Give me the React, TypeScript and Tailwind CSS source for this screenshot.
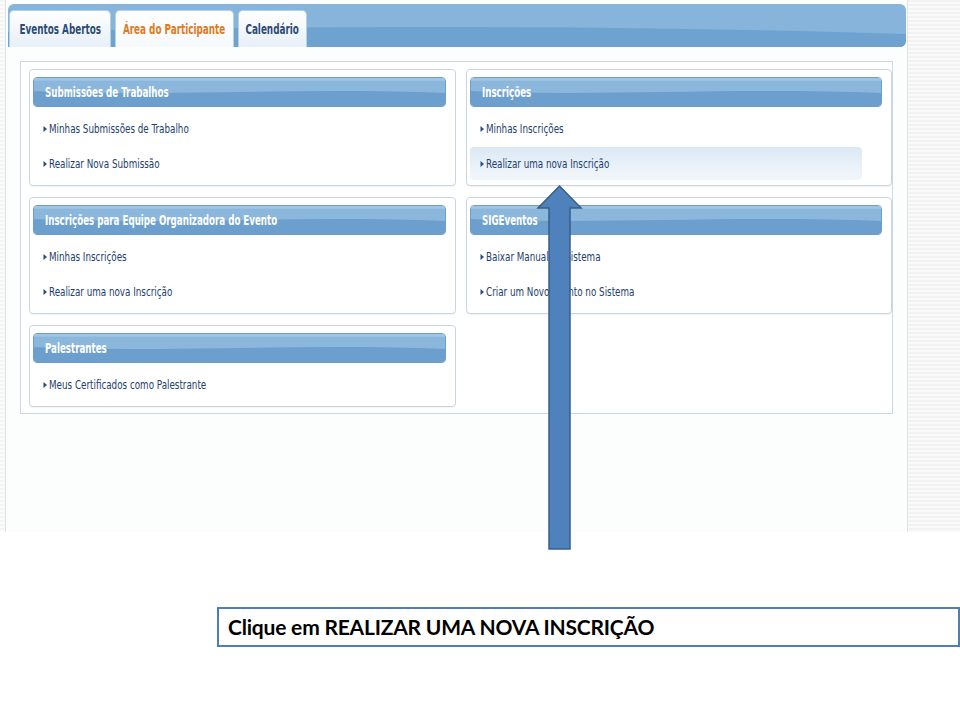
import React from "react";

const UI_FONT = "font-['DejaVu_Sans_Condensed','DejaVu_Sans',sans-serif]";

function Wave({ light, dark }: { light: string; dark: string }) {
  return (
    <svg className="absolute inset-0 w-full h-full" preserveAspectRatio="none" viewBox="0 0 400 30">
      <rect x="0" y="0" width="400" height="30" fill={light} />
      <path d="M0 14 C 120 20, 260 10, 400 16 L400 30 L0 30 Z" fill={dark} />
      <rect x="0" y="0" width="400" height="3" fill="#ffffff" opacity="0.18" />
    </svg>
  );
}

function Bullet() {
  return (
    <svg width="5" height="8" viewBox="0 0 5 8" className="mr-[1px] shrink-0">
      <path d="M0.5 1 L4 4 L0.5 7 Z" fill="#2d4d7e" />
    </svg>
  );
}

function Card({ title, items, highlight }: { title: string; items: string[]; highlight?: number }) {
  return (
    <div className="bg-white border border-[#c9d6e2] rounded-[4px] pt-[7px] pb-[4px] pl-[3px] pr-[9px] shadow-[0_1px_1px_rgba(0,0,0,0.05)]">
      <div className="relative h-[30px] rounded-[4px] overflow-hidden border border-[#6b9ecb]">
        <Wave light="#8bb7dc" dark="#6c9fcd" />
        <div className={`relative h-full flex items-center pl-[11px] text-white text-[14px] font-bold ${UI_FONT}`}>
          <span className="inline-block whitespace-nowrap origin-left scale-x-[0.69]">{title}</span>
        </div>
      </div>
      <div className="mt-[4px]">
        {items.map((it, i) => (
          <div
            key={i}
            className={`flex items-center pl-[10px] text-[13px] text-[#22406f] ${UI_FONT} ${
              highlight === i
                ? "bg-[linear-gradient(to_bottom,#dbe8f4,#eaf2f9_60%,#f1f6fb)] rounded-[4px] mr-[20px] my-[1px] h-[33px]"
                : "h-[35px]"
            }`}
          >
            <Bullet />
            <span className="inline-block whitespace-nowrap origin-left scale-x-[0.75]">{it}</span>
          </div>
        ))}
      </div>
    </div>
  );
}

function Tab({ label, active, w }: { label: string; active?: boolean; w: string }) {
  return (
    <div
      className={`${w} h-[37px] rounded-t-[5px] border border-b-0 flex items-center justify-center text-[14px] font-bold ${UI_FONT} ${
        active
          ? "bg-[linear-gradient(to_bottom,#ffffff,#f6f9fc)] border-[#b9d2e8] text-[#e07a1c]"
          : "bg-[linear-gradient(to_bottom,#ffffff,#e7eff7)] border-[#b6cfe5] text-[#2b4a78]"
      }`}
    >
      <span className="inline-block whitespace-nowrap scale-x-[0.7]">{label}</span>
    </div>
  );
}

export default function App() {
  return (
    <div className="relative w-[960px] h-[720px] bg-white overflow-hidden">
      <div className="flex h-[532px]">
        <div className="w-[5px] bg-[repeating-linear-gradient(to_bottom,#f4f4f4_0px,#f4f4f4_2px,#fbfbfb_2px,#fbfbfb_4px)]" />
        <div className="w-[903px] border-l border-r border-[#dde3e8] bg-[#fcfdfd] flex flex-col pl-[2px] pr-[1px] pt-[4px]">
          {/* tab bar */}
          <div className="relative h-[43px] rounded-t-[6px] rounded-br-[6px] overflow-hidden">
            <svg className="absolute inset-0 w-full h-full" preserveAspectRatio="none" viewBox="0 0 900 43">
              <rect width="900" height="43" fill="#86b4da" />
              <path d="M0 28 C 250 22, 600 20, 900 30 L900 43 L0 43 Z" fill="#6fa3cf" />
            </svg>
            <div className="relative flex items-end gap-[4px] h-full pl-[1px]">
              <Tab label="Eventos Abertos" w="w-[102px]" />
              <Tab label="Área do Participante" w="w-[119px]" active />
              <Tab label="Calendário" w="w-[69px]" />
            </div>
          </div>
          {/* outer panel */}
          <div className="mt-[14px] ml-[12px] mr-[13px] border border-[#ccd9e4] bg-white pt-[7px] pb-[6px] pl-[8px] pr-[1px] grid grid-cols-[427px_426px] gap-x-[10px]">
            <div className="flex flex-col gap-[11px]">
              <Card title="Submissões de Trabalhos" items={["Minhas Submissões de Trabalho", "Realizar Nova Submissão"]} />
              <Card
                title="Inscrições para Equipe Organizadora do Evento"
                items={["Minhas Inscrições", "Realizar uma nova Inscrição"]}
              />
              <Card title="Palestrantes" items={["Meus Certificados como Palestrante"]} />
            </div>
            <div className="flex flex-col gap-[11px]">
              <Card title="Inscrições" items={["Minhas Inscrições", "Realizar uma nova Inscrição"]} highlight={1} />
              <Card title="SIGEventos" items={["Baixar Manual do Sistema", "Criar um Novo Evento no Sistema"]} />
            </div>
          </div>
        </div>
        <div className="flex-1 bg-[repeating-linear-gradient(to_bottom,#f2f2f2_0px,#f2f2f2_2px,#fafafa_2px,#fafafa_4px)]" />
      </div>

      {/* caption box */}
      <div className="mt-[75px] ml-[217px] w-[743px] h-[40px] border-2 border-[#4f7dba] flex items-center pl-[9px]">
        <span className="font-['Lato','Open_Sans',sans-serif] font-bold text-[21px] text-black tracking-[-0.2px]">
          Clique em REALIZAR UMA NOVA INSCRIÇÃO
        </span>
      </div>

      {/* arrow */}
      <svg className="absolute left-0 top-0 pointer-events-none" width="960" height="720" viewBox="0 0 960 720">
        <polygon
          points="559.5,186 581,208 570,208 570,549 549,549 549,208 538,208"
          fill="#4f81bd"
          stroke="#385d8a"
          strokeWidth="1.5"
          strokeLinejoin="miter"
        />
      </svg>
    </div>
  );
}
